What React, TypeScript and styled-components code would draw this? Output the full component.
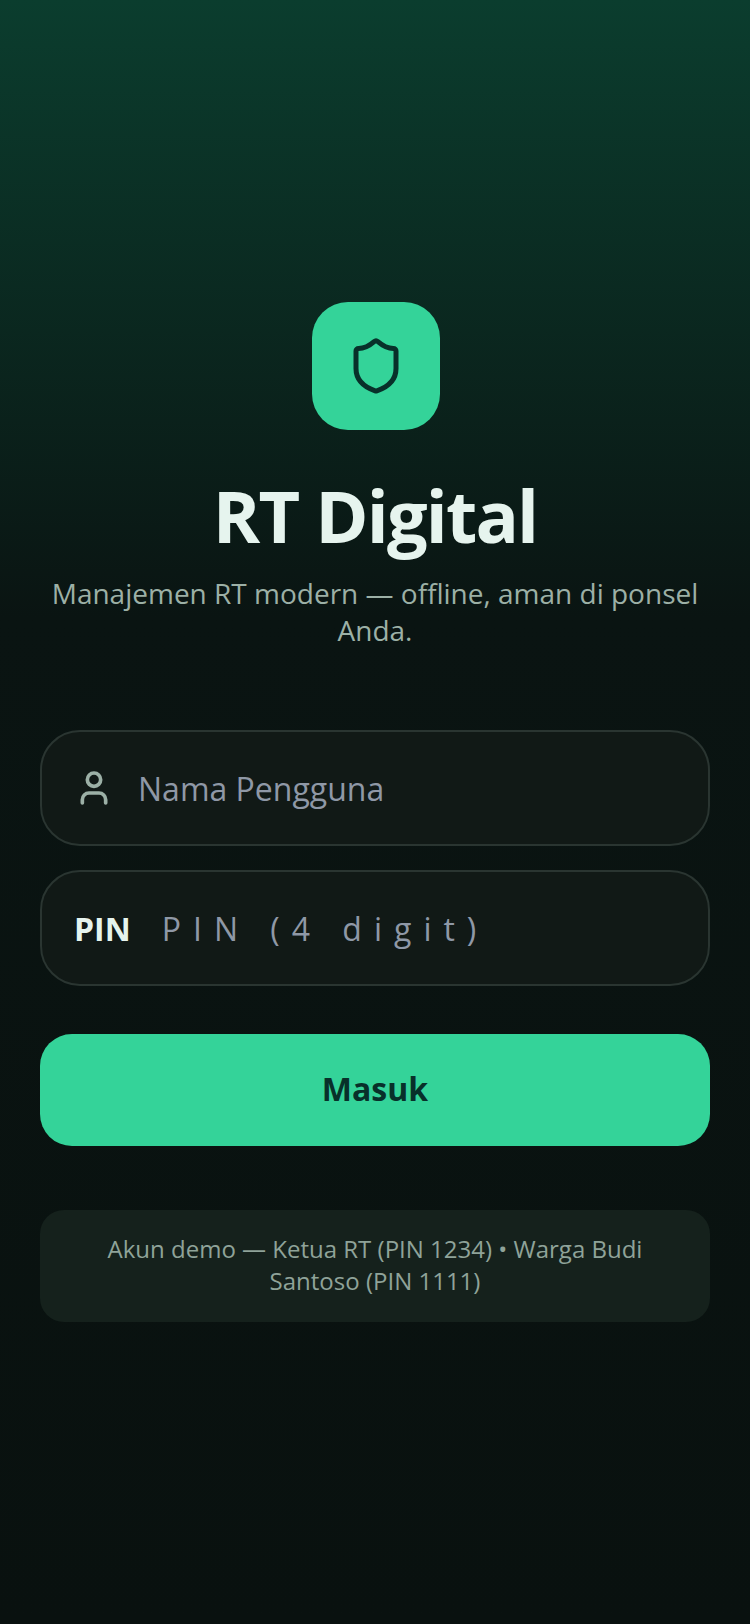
import styled, { createGlobalStyle } from 'styled-components';
import { Shield, User } from 'lucide-react';

const GlobalStyle = createGlobalStyle`
  html, body {
    margin: 0;
    padding: 0;
    background: #09110f;
  }
  * {
    box-sizing: border-box;
  }
`;

const Page = styled.main`
  min-height: 1624px;
  width: 750px;
  padding: 0 40px;
  display: flex;
  flex-direction: column;
  justify-content: center;
  background: linear-gradient(180deg, #0b3d2e 0%, #0a1412 38%, #09110f 100%);
  font-family: "Open Sans", sans-serif;
`;

const Hero = styled.div`
  display: flex;
  flex-direction: column;
  align-items: center;
  text-align: center;
  margin-bottom: 80px;
`;

const Logo = styled.div`
  width: 128px;
  height: 128px;
  margin: 0 0 40px 2px;
  border-radius: 36px;
  background: #34d399;
  color: #08302a;
  display: flex;
  align-items: center;
  justify-content: center;
`;

const Title = styled.h1`
  margin: 0 0 16px;
  color: #e6f4ee;
  font-size: 72px;
  line-height: 90px;
  letter-spacing: -0.025em;
  font-weight: 700;
`;

const Subtitle = styled.p`
  margin: -1px 0 1px;
  color: #9cb0a6;
  font-size: 28px;
  line-height: 37px;
`;

const Form = styled.form`
  display: flex;
  flex-direction: column;
  gap: 24px;
`;

const Field = styled.label`
  height: 116px;
  padding: 0 32px;
  display: flex;
  align-items: center;
  gap: 24px;
  background: #111916;
  border: 2px solid #2a3531;
  border-radius: 40px;
  color: #9cb0a6;
`;

const PinLabel = styled.span`
  color: #e6f4ee;
  font-size: 32px;
  font-weight: 700;
  margin-right: 7px;
`;

const Input = styled.input<{ $spaced?: boolean }>`
  flex: 1;
  min-width: 0;
  border: none;
  outline: none;
  padding: 0;
  background: transparent;
  color: #e6f4ee;
  font-family: inherit;
  font-size: 32px;
  letter-spacing: ${(p) => (p.$spaced ? '12px' : 'normal')};

  &::placeholder {
    color: #8f98a6;
    opacity: 1;
  }
`;

const SubmitButton = styled.button`
  height: 112px;
  margin-top: 24px;
  padding: 0 0 3px;
  border: none;
  border-radius: 32px;
  background: #34d399;
  color: #08302a;
  font-family: inherit;
  font-size: 32px;
  font-weight: 700;
`;

const DemoNote = styled.div`
  margin-top: 64px;
  padding: 23px 40px 25px;
  border-radius: 24px;
  background: #15211c;
  color: #8fa399;
  font-size: 24px;
  line-height: 32px;
  text-align: center;
`;

export default function App() {
  return (
    <Page>
      <GlobalStyle />
      <Hero>
        <Logo>
          <Shield size={60} strokeWidth={2} />
        </Logo>
        <Title>RT Digital</Title>
        <Subtitle>Manajemen RT modern — offline, aman di ponsel Anda.</Subtitle>
      </Hero>

      <Form>
        <Field>
          <User size={40} strokeWidth={2.2} />
          <Input placeholder="Nama Pengguna" />
        </Field>
        <Field>
          <PinLabel>PIN</PinLabel>
          <Input $spaced placeholder="PIN (4 digit)" />
        </Field>
        <SubmitButton type="button">Masuk</SubmitButton>
      </Form>

      <DemoNote>Akun demo — Ketua RT (PIN 1234) • Warga Budi Santoso (PIN 1111)</DemoNote>
    </Page>
  );
}
